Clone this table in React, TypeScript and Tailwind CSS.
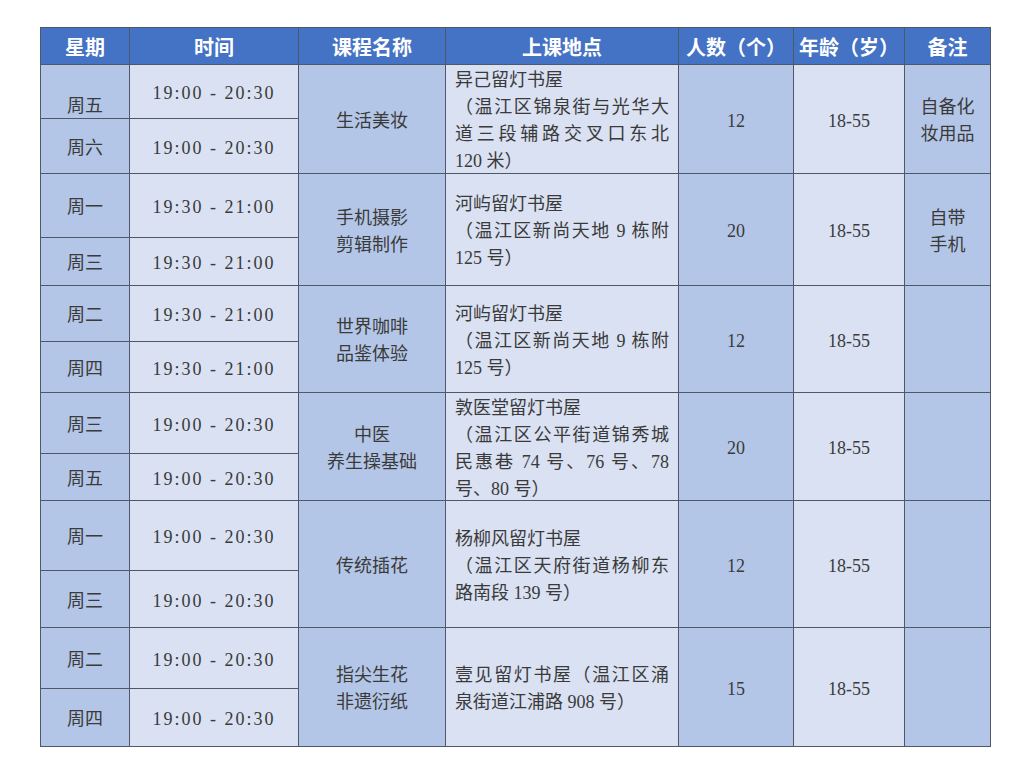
import React from "react";

type Line = { t: string; j?: boolean };
type Group = {
  days: [string, string];
  dayShift?: boolean;
  times: [string, string];
  course: string[];
  loc: Line[];
  num: string;
  age: string;
  note: string[];
};

const groups: Group[] = [
  {
    days: ["周五", "周六"],
    dayShift: true,
    times: ["19:00 - 20:30", "19:00 - 20:30"],
    course: ["生活美妆"],
    loc: [
      { t: "异己留灯书屋" },
      { t: "（温江区锦泉街与光华大", j: true },
      { t: "道三段辅路交叉口东北", j: true },
      { t: "120 米）" },
    ],
    num: "12",
    age: "18-55",
    note: ["自备化", "妆用品"],
  },
  {
    days: ["周一", "周三"],
    times: ["19:30 - 21:00", "19:30 - 21:00"],
    course: ["手机摄影", "剪辑制作"],
    loc: [
      { t: "河屿留灯书屋" },
      { t: "（温江区新尚天地 9 栋附", j: true },
      { t: "125 号）" },
    ],
    num: "20",
    age: "18-55",
    note: ["自带", "手机"],
  },
  {
    days: ["周二", "周四"],
    times: ["19:30 - 21:00", "19:30 - 21:00"],
    course: ["世界咖啡", "品鉴体验"],
    loc: [
      { t: "河屿留灯书屋" },
      { t: "（温江区新尚天地 9 栋附", j: true },
      { t: "125 号）" },
    ],
    num: "12",
    age: "18-55",
    note: [],
  },
  {
    days: ["周三", "周五"],
    times: ["19:00 - 20:30", "19:00 - 20:30"],
    course: ["中医", "养生操基础"],
    loc: [
      { t: "敦医堂留灯书屋" },
      { t: "（温江区公平街道锦秀城", j: true },
      { t: "民惠巷 74 号、76 号、78", j: true },
      { t: "号、80 号）" },
    ],
    num: "20",
    age: "18-55",
    note: [],
  },
  {
    days: ["周一", "周三"],
    times: ["19:00 - 20:30", "19:00 - 20:30"],
    course: ["传统插花"],
    loc: [
      { t: "杨柳风留灯书屋" },
      { t: "（温江区天府街道杨柳东", j: true },
      { t: "路南段 139 号）" },
    ],
    num: "12",
    age: "18-55",
    note: [],
  },
  {
    days: ["周二", "周四"],
    times: ["19:00 - 20:30", "19:00 - 20:30"],
    course: ["指尖生花", "非遗衍纸"],
    loc: [
      { t: "壹见留灯书屋（温江区涌", j: true },
      { t: "泉街道江浦路 908 号）" },
    ],
    num: "15",
    age: "18-55",
    note: [],
  },
];

const headers = ["星期", "时间", "课程名称", "上课地点", "人数（个）", "年龄（岁）", "备注"];

const dark = "bg-[#b4c6e7]";
const light = "bg-[#d9e1f2]";

export default function App() {
  return (
    <div className="min-h-[773px] w-[1024px] bg-white pl-[40px] pt-[27px]">
      <div
        className="grid w-[951px] gap-px border border-[#4f5868] bg-[#4f5868] text-[18px] leading-[27px] text-[#3a3a3a] grid-cols-[88px_168px_146px_232px_114px_110px_85px] grid-rows-[36px_53px_54px_63px_47px_55px_50px_60px_46px_69px_56px_60px_57px]"
        style={{ fontFamily: '"Liberation Serif", "Noto Sans CJK SC", serif' }}
      >
        {headers.map((h) => (
          <div
            key={h}
            className="flex items-center justify-center bg-[#4472c4] text-[20px] font-bold text-white"
            style={{ fontFamily: '"Noto Sans CJK SC", "Noto Sans", sans-serif' }}
          >
            {h}
          </div>
        ))}
        {groups.map((g, gi) => (
          <React.Fragment key={gi}>
            <div className={`flex justify-center ${dark} ${g.dayShift ? "items-start pt-[28px]" : "items-center pt-[4px]"}`}>
              {g.days[0]}
            </div>
            <div className={`flex items-center justify-center pt-[4px] tracking-[2px] ${light}`}>{g.times[0]}</div>
            <div className={`row-span-2 flex flex-col items-center justify-center pt-[4px] ${dark}`}>
              {g.course.map((c) => (
                <div key={c}>{c}</div>
              ))}
            </div>
            <div className={`row-span-2 flex flex-col justify-center px-[9px] pt-[4px] ${light}`}>
              {g.loc.map((l, li) => (
                <div key={li} className={l.j ? "text-justify [text-align-last:justify]" : "text-left"}>
                  {l.t}
                </div>
              ))}
            </div>
            <div className={`row-span-2 flex items-center justify-center pt-[4px] ${dark}`}>{g.num}</div>
            <div className={`row-span-2 flex items-center justify-center pt-[4px] ${light}`}>{g.age}</div>
            <div className={`row-span-2 flex flex-col items-center justify-center pt-[4px] ${dark}`}>
              {g.note.map((n) => (
                <div key={n}>{n}</div>
              ))}
            </div>
            <div className={`flex items-center justify-center pt-[4px] ${dark}`}>{g.days[1]}</div>
            <div className={`flex items-center justify-center pt-[4px] tracking-[2px] ${light}`}>{g.times[1]}</div>
          </React.Fragment>
        ))}
      </div>
    </div>
  );
}
